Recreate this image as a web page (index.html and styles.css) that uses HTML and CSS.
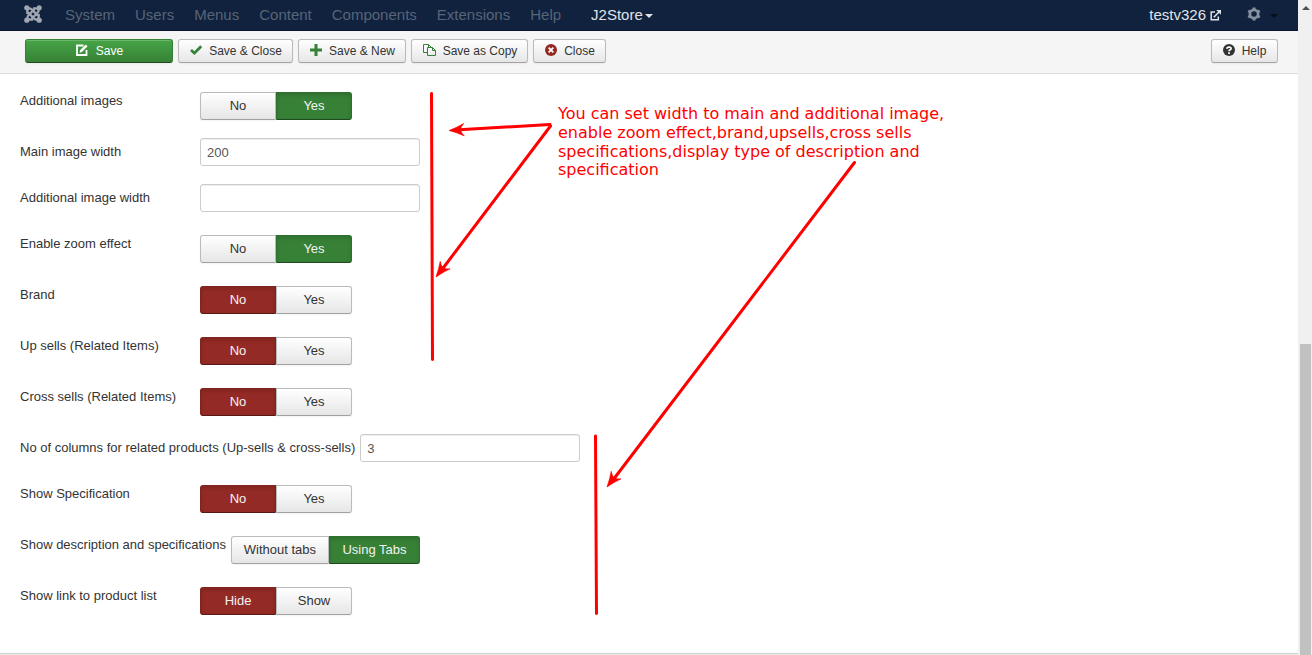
FILE: index.html
```html
<!DOCTYPE html>
<html lang="en">
<head>
<meta charset="utf-8">
<title>J2Store</title>
<link rel="stylesheet" href="styles.css">
</head>
<body>
<div class="app">
<div class="page">
  <nav class="navbar">
    <svg class="brand" viewBox="0 0 18 18" width="18" height="18"><g fill="none" stroke="currentColor" stroke-width="2.300"><path d="M3.300 9V6.200C3.300 3.200 6 2.600 8 4.600L14 10.600"/><path d="M9 3.300H11.800C14.800 3.300 15.400 6 13.400 8L7.400 14"/><path d="M14.700 9V11.800C14.700 14.800 12 15.400 10 13.400L4 7.400"/><path d="M9 14.700H6.200C3.200 14.700 2.600 12 4.600 10L10.600 4"/></g><g fill="currentColor"><circle cx="2.800" cy="2.800" r="2.600"/><circle cx="15.200" cy="2.800" r="2.600"/><circle cx="2.800" cy="15.200" r="2.600"/><circle cx="15.200" cy="15.200" r="2.600"/></g></svg>
    <div class="menu"><span>System</span><span>Users</span><span>Menus</span><span>Content</span><span>Components</span><span>Extensions</span><span>Help</span></div>
    <div class="store">J2Store<i class="caret"></i></div>
    <div class="site">testv326<svg viewBox="0 0 11 11" width="11" height="11"><path d="M5 2H1.200V9.800H8.300V6.500" fill="none" stroke="currentColor" stroke-width="1.500"/><path d="M3.800 7.200L9 2" stroke="currentColor" stroke-width="1.600"/><path d="M6.200 0H11V4.800Z" fill="currentColor"/></svg></div>
    <svg class="gear" viewBox="0 0 14 14" width="14" height="14"><circle cx="7" cy="7" r="4.100" fill="none" stroke="currentColor" stroke-width="2.700"/><path d="M7 .4V3M7 11V13.600M1.300 3.700L3.500 5M10.500 9L12.700 10.300M1.300 10.300L3.500 9M10.500 5L12.700 3.700" stroke="currentColor" stroke-width="3"/></svg>
    <i class="caret dark"></i>
  </nav>
  <div class="toolbar">
    <button class="btn save"><svg viewBox="0 0 12 12" width="12" height="12"><path d="M7.500 1.500H1V11H10.500V6" fill="none" stroke="currentColor" stroke-width="1.800"/><path d="M3.500 8.700L4.200 6 9.800.4 11.600 2.200 6 7.900Z" fill="currentColor"/></svg>Save</button>
    <button class="btn close-save"><svg class="green" viewBox="0 0 12 12" width="12" height="12"><path d="M1 6L4.400 9.200 11.200 2.300" fill="none" stroke="currentColor" stroke-width="2.700"/></svg>Save &amp; Close</button>
    <button class="btn new"><svg class="green" viewBox="0 0 12 12" width="12" height="12"><path d="M6 0V12M0 6H12" stroke="currentColor" stroke-width="3"/></svg>Save &amp; New</button>
    <button class="btn copy"><svg class="green" viewBox="0 0 13 12" width="13" height="12"><g fill="none" stroke="currentColor"><path d="M4.500 8.500H.5V.5H5.500L8.500 3.500M5.500.5V3"/><path d="M4.500 3.500H9.500L12.500 6.500V11.500H4.500ZM9.500 3.500V6.500H12.500"/></g></svg>Save as Copy</button>
    <button class="btn close"><svg class="red" viewBox="0 0 12 12" width="12" height="12"><circle cx="6" cy="6" r="6" fill="currentColor"/><path d="M3.700 3.700L8.300 8.300M8.300 3.700L3.700 8.300" stroke="#fff" stroke-width="1.800"/></svg>Close</button>
    <button class="btn help"><svg viewBox="0 0 12 12" width="12" height="12"><circle cx="6" cy="6" r="6" fill="currentColor"/><path d="M3.900 4.700C4 2.500 8.200 2.500 8.100 4.600C8 5.900 6 5.700 6 7.300M6 8.300V9.900" fill="none" stroke="#fff" stroke-width="1.700"/></svg>Help</button>
  </div>
  <form class="form">
    <div class="row"><label>Additional images</label><div class="group"><span class="opt">No</span><span class="opt yes">Yes</span></div></div>
    <div class="row"><label>Main image width</label><input type="text" value="200"></div>
    <div class="row"><label>Additional image width</label><input type="text"></div>
    <div class="row"><label>Enable zoom effect</label><div class="group"><span class="opt">No</span><span class="opt yes">Yes</span></div></div>
    <div class="row"><label>Brand</label><div class="group"><span class="opt no">No</span><span class="opt">Yes</span></div></div>
    <div class="row"><label>Up sells (Related Items)</label><div class="group"><span class="opt no">No</span><span class="opt">Yes</span></div></div>
    <div class="row"><label>Cross sells (Related Items)</label><div class="group"><span class="opt no">No</span><span class="opt">Yes</span></div></div>
    <div class="row"><label>No of columns for related products (Up-sells &amp; cross-sells)</label><input type="text" value="3"></div>
    <div class="row"><label>Show Specification</label><div class="group"><span class="opt no">No</span><span class="opt">Yes</span></div></div>
    <div class="row"><label>Show description and specifications</label><div class="group tabs"><span class="opt">Without tabs</span><span class="opt yes">Using Tabs</span></div></div>
    <div class="row"><label>Show link to product list</label><div class="group"><span class="opt no">Hide</span><span class="opt">Show</span></div></div>
  </form>
  <div class="status"></div>
</div>
<div class="scrollbar"><i class="up"></i><div class="thumb"></div></div>
<svg class="marks" viewBox="0 0 1312 655" width="1312" height="655">
  <defs><path id="head" d="M0 0Q8 -2.500 15 -6.200Q12 -3 11.500 0Q12 3 15 6.200Q8 2.500 0 0Z" stroke="#f00" stroke-width=".6"/></defs>
  <g fill="none" stroke="#f00" stroke-width="3" stroke-linecap="round" stroke-linejoin="round">
    <path d="M431.500 93.500L432.500 359.500M595.500 436L596.500 613.500"/>
    <path d="M459 129.700L550 124.500"/><path d="M550.500 126L442 269.500M854.500 162.500L613 480"/>
  </g>
  <g fill="#f00"><use href="#head" transform="translate(449 130.500) rotate(-3)"/><use href="#head" transform="translate(436 277) rotate(-52.500)"/><use href="#head" transform="translate(607 487) rotate(-52.500)"/></g>
</svg>
<div class="note"><div>You can set width to main and additional image,</div><div>enable zoom effect,brand,upsells,cross sells</div><div>specifications,display type of description and</div><div>specification</div></div>
</div>
</body>
</html>
```
FILE: styles.css
```css
* { box-sizing: border-box; }
body { margin: 0; font: 13px/18px "Liberation Sans", Arial, sans-serif; color: #333; overflow: hidden; }
.app { position: relative; display: flex; width: 1312px; height: 655px; background: #fff; }
.page { display: flex; flex-direction: column; width: 1298px; }
.navbar { display: flex; align-items: center; height: 31px; padding: 0 20px 0 24px; background: #10223e; border-bottom: 1px solid #0b182c; font-size: 15px; line-height: 30px; color: #e0e3e8; }
.brand { color: #a0a7b2; margin: -2px 23px 0 0; }
.menu { display: flex; gap: 20px; color: #586478; }
.store { display: flex; align-items: center; margin-left: 30px; }
.caret { width: 0; height: 0; border: 4px solid transparent; border-top-color: currentColor; border-bottom: 0; margin: 2px 0 0 2px; }
.site { display: flex; align-items: center; gap: 4px; margin-left: auto; }
.gear { color: #8790a0; margin: -3px 0 0 26px; }
.caret.dark { color: #070e19; margin-left: 9px; }
.toolbar { display: flex; gap: 5px; height: 43px; padding: 8px 20px 0 25px; background: #f5f5f5; border-bottom: 1px solid #ddd; }
.btn { display: flex; align-items: center; justify-content: center; gap: 7px; height: 24px; padding: 0; border: 1px solid #bbb; border-bottom-color: #a2a2a2; border-radius: 3px; background: linear-gradient(#fff, #e6e6e6); box-shadow: inset 0 1px 0 rgba(255,255,255,.2), 0 1px 2px rgba(0,0,0,.05); font: 12px/18px "Liberation Sans", Arial, sans-serif; color: #333; }
.btn svg { margin-top: -2px; }
.save { width: 148px; gap: 8px; padding-left: 1px; background: linear-gradient(#46a546, #378137); border-color: #378137 #378137 #204b20; color: #fff; }
.close-save { width: 115px; padding-left: 1px; }
.new { width: 108px; padding-left: 1px; }
.copy { width: 117px; padding-left: 1px; }
.close { width: 73px; padding-left: 1px; }
.help { width: 67px; margin-left: auto; }
.green { color: #378137; }
.red { color: #942a25; }
.form { display: flex; flex-direction: column; gap: 18px; padding: 13px 20px 0; }
.row { display: flex; align-items: flex-start; }
.row label { min-width: 180px; padding: 5px 5px 0 0; white-space: nowrap; }
.row input { width: 220px; height: 28px; padding: 4px 6px; border: 1px solid #ccc; border-radius: 3px; box-shadow: inset 0 1px 1px rgba(0,0,0,.075); font: 13px/18px "Liberation Sans", Arial, sans-serif; color: #555; }
.group { display: flex; padding-top: 5px; }
.opt { width: 76px; height: 28px; padding-top: 4px; text-align: center; border: 1px solid #bbb; border-bottom-color: #a2a2a2; border-radius: 3px 0 0 3px; background: linear-gradient(#fff, #e6e6e6); box-shadow: 0 1px 2px rgba(0,0,0,.05); }
.opt:last-child { border-radius: 0 3px 3px 0; }
.opt.yes { background: #378137; border-color: #2f6f2f #2f6f2f #204b20; box-shadow: inset 0 2px 4px rgba(0,0,0,.15); color: #f3f3f3; }
.opt.no { background: #942a25; border-color: #802420 #802420 #571916; box-shadow: inset 0 2px 4px rgba(0,0,0,.15); color: #f3f3f3; }
.tabs .opt { width: 98px; }
.tabs .opt:last-child { width: 91px; }
.status { height: 2px; margin-top: auto; background: #ebebeb; border-top: 1px solid #d0d0d0; }
.scrollbar { display: flex; flex-direction: column; justify-content: space-between; width: 14px; padding: 6px 1px 0 2px; background: #f0f0f0; }
.up { width: 0; margin-left: 2px; border: 4px solid transparent; border-top: 0; border-bottom-color: #505050; }
.thumb { height: 311px; background: #c1c1c1; }
.marks { position: absolute; left: 0; top: 0; }
.note { position: absolute; left: 558px; top: 105.300px; font: 16px/18.660px "DejaVu Sans", sans-serif; color: #f00; white-space: nowrap; }
```
